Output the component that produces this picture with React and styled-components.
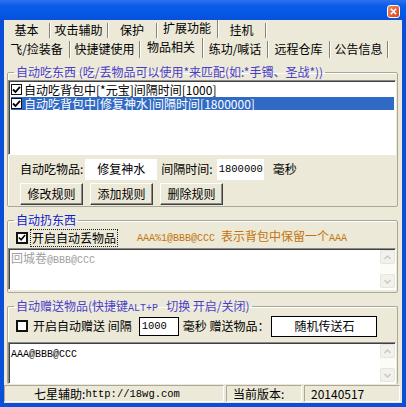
import React from 'react'
import styled, { createGlobalStyle } from 'styled-components'

const CJK = `"Noto Sans CJK SC", "Noto Sans", sans-serif`
const MONO = `"Liberation Mono", "DejaVu Sans Mono", monospace`

const GlobalStyle = createGlobalStyle`
  html, body {
    margin: 0;
    padding: 0;
    background: #fff;
  }
  body {
    font-family: ${CJK};
    font-size: 12px;
  }
`

const Window = styled.div`
  width: 406px;
  height: 407px;
  display: flex;
  flex-direction: column;
  overflow: hidden;
  background: #0a4fd8;
  font-family: ${CJK};
  font-size: 12px;
  line-height: 14px;
  color: #000;
`

const TitleBar = styled.div`
  flex: none;
  height: 20px;
  box-sizing: border-box;
  display: flex;
  justify-content: flex-end;
  align-items: flex-start;
  padding: 5px 6px 0 0;
  background: linear-gradient(to bottom, #2c72ee 0, #0b5be8 30%, #0556e4 75%, #0a4fd8 100%);
`

const CloseButton = styled.div`
  width: 13px;
  height: 13px;
  box-sizing: border-box;
  border: 1px solid #fff;
  border-radius: 3px;
  background: linear-gradient(135deg, #ee8a62, #d4431a);
  display: flex;
  align-items: center;
  justify-content: center;
`

const Frame = styled.div`
  flex: 1;
  min-height: 0;
  margin: 0 4px 4px;
  background: #ece9d8;
  display: flex;
  flex-direction: column;
`

const TabRow = styled.div`
  flex: none;
  height: ${p => p.$h}px;
  display: flex;
  align-items: flex-end;
`

const Tab = styled.div`
  width: ${p => p.$w}px;
  height: ${p => (p.$active ? '100%' : 'calc(100% - 3px)')};
  box-sizing: border-box;
  display: flex;
  align-items: center;
  justify-content: center;
  padding-bottom: ${p => (p.$active ? 3 : 1)}px;
  border-right: 1px solid #85837a;
  box-shadow: 1px 0 0 #fff;
  white-space: nowrap;
`

const Page = styled.div`
  flex: 1;
  min-height: 0;
  display: flex;
  flex-direction: column;
  gap: 6px;
  padding: 7px 4px 0 3px;
`

const Group = styled.fieldset`
  margin: 0;
  min-width: 0;
  padding: ${p => p.$pt}px 1px ${p => p.$pb}px 0;
  border: 1px solid #a9a797;
  border-bottom: ${p => (p.$open ? 'none' : '1px solid #a9a797')};
  border-radius: 2px;
  box-shadow: inset 1px 1px 0 #fff;
`

const Legend = styled.legend`
  margin-left: 6px;
  padding: 0 2px;
  height: 14px;
  line-height: 14px;
  color: ${p => p.$color};
  white-space: pre;
`

const Column = styled.div`
  display: flex;
  flex-direction: column;
  gap: ${p => p.$gap}px;
`

const Sunken = styled.div`
  box-sizing: border-box;
  background: #fff;
  border: 1px solid;
  border-color: #8a8a8a #fff #fff #8a8a8a;
  box-shadow: inset 1px 1px 0 #404040;
`

const ListBox = styled(Sunken)`
  height: 75px;
  padding: 2px 1px 0 2px;
  display: flex;
  flex-direction: column;
  gap: 1px;
`

const ListRow = styled.div`
  height: 13px;
  line-height: 13px;
  display: flex;
  align-items: center;
  gap: 2px;
  background: ${p => (p.$selected ? '#316ac5' : 'transparent')};
  color: ${p => (p.$selected ? '#fff' : '#000')};
  white-space: nowrap;
`

const Check = styled.span`
  flex: none;
  width: ${p => (p.$bold ? 12 : 11)}px;
  height: ${p => (p.$bold ? 12 : 11)}px;
  box-sizing: border-box;
  background: #fff;
  border: ${p => (p.$bold ? 2 : 1)}px solid #111;
  display: flex;
  align-items: center;
  justify-content: center;
`

const Mono = styled.span`
  font-family: ${MONO};
  font-size: ${p => p.$size || 10}px;
`

const Row = styled.div`
  height: ${p => p.$h}px;
  display: flex;
  align-items: center;
  padding-left: ${p => p.$pl}px;
  gap: ${p => p.$gap || 0}px;
  white-space: nowrap;
`

const Label = styled.span`
  margin-left: ${p => p.$ml || 0}px;
  color: ${p => p.$color || 'inherit'};
`

const Field = styled.div`
  width: ${p => p.$w}px;
  height: ${p => p.$h || 21}px;
  margin-left: ${p => p.$ml || 0}px;
  box-sizing: border-box;
  background: #fff;
  border: ${p => (p.$framed ? '1px solid #000' : 'none')};
  display: flex;
  align-items: center;
  justify-content: ${p => (p.$center ? 'center' : 'flex-start')};
  padding-left: ${p => (p.$center ? 0 : 2)}px;
`

const Button = styled.div`
  width: 63px;
  height: 22px;
  box-sizing: border-box;
  display: flex;
  align-items: center;
  justify-content: center;
  background: #ece9d8;
  border: 1px solid;
  border-color: #fff #404040 #404040 #fff;
  box-shadow: inset -1px -1px 0 #8a8a8a;
`

const FocusLabel = styled.span`
  margin-left: 3px;
  padding: 1px 1px;
  outline: 1px dotted #222;
  outline-offset: 0;
`

const TextArea = styled(Sunken)`
  height: ${p => p.$h}px;
  display: flex;
`

const TextBody = styled.div`
  flex: 1;
  padding: 2px 2px;
  color: ${p => (p.$disabled ? '#a0a0a0' : '#000')};
  white-space: nowrap;
`

const ScrollBar = styled.div`
  flex: none;
  width: 15px;
  margin: 1px 0;
  display: flex;
  flex-direction: column;
  justify-content: space-between;
  background: #fbfbf7;
`

const ScrollButton = styled.div`
  height: 14px;
  box-sizing: border-box;
  border: 1px solid #e6e4dc;
  border-radius: 2px;
  background: #f2f1eb;
  display: flex;
  align-items: center;
  justify-content: center;
`

const StatusBar = styled.div`
  flex: none;
  height: 19px;
  box-sizing: border-box;
  display: flex;
  gap: 2px;
  padding: 1px 2px 1px 0;
`

const Panel = styled.div`
  width: ${p => (p.$w ? `${p.$w}px` : 'auto')};
  flex: ${p => (p.$w ? 'none' : '1')};
  box-sizing: border-box;
  border: 1px solid;
  border-color: #aca899 #fff #fff #aca899;
  display: flex;
  align-items: center;
  justify-content: ${p => (p.$center ? 'center' : 'flex-start')};
  padding: ${p => (p.$center ? '0 14px 0 0' : '0 0 0 6px')};
  white-space: nowrap;
`

const CheckMark = () => (
  <svg width="9" height="9" viewBox="0 0 9 9">
    <path d="M1 4.5 L3.5 7 L8 1.8" fill="none" stroke="#000" strokeWidth="1.8" />
  </svg>
)

const Arrow = ({ up }) => (
  <svg width="7" height="5" viewBox="0 0 7 5">
    <path d={up ? 'M0.5 4 L3.5 1 L6.5 4' : 'M0.5 1 L3.5 4 L6.5 1'} fill="none" stroke="#c9c7bb" strokeWidth="1.4" />
  </svg>
)

const Scroll = () => (
  <ScrollBar>
    <ScrollButton><Arrow up /></ScrollButton>
    <ScrollButton><Arrow /></ScrollButton>
  </ScrollBar>
)

const outerTabs = [
  { label: '基本', w: 46 },
  { label: '攻击辅助', w: 58 },
  { label: '保护', w: 49 },
  { label: '扩展功能', w: 61, active: true },
  { label: '挂机', w: 48 },
]

const innerTabs = [
  { label: '飞/捡装备', w: 66 },
  { label: '快捷键使用', w: 70 },
  { label: '物品相关', w: 63, active: true },
  { label: '练功/喊话', w: 65 },
  { label: '远程仓库', w: 62 },
  { label: '公告信息', w: 58 },
]

export default function App() {
  return (
    <>
      <GlobalStyle />
      <Window>
        <TitleBar>
          <CloseButton>
            <svg width="7" height="7" viewBox="0 0 7 7">
              <path d="M0.8 0.8 L6.2 6.2 M6.2 0.8 L0.8 6.2" stroke="#fff" strokeWidth="1.6" />
            </svg>
          </CloseButton>
        </TitleBar>
        <Frame>
          <TabRow $h={18}>
            {outerTabs.map(t => (
              <Tab key={t.label} $w={t.w} $active={t.active}>{t.label}</Tab>
            ))}
          </TabRow>
          <TabRow $h={20}>
            {innerTabs.map(t => (
              <Tab key={t.label} $w={t.w} $active={t.active}>{t.label}</Tab>
            ))}
          </TabRow>

          <Page>
            <Group $pt={1} $pb={1}>
              <Legend $color="#4a3ec8">自动吃东西 (吃/丢物品可以使用*来匹配(如:*手镯、圣战*))</Legend>
              <Column $gap={3}>
                <ListBox>
                  <ListRow>
                    <Check><CheckMark /></Check>
                    <span>自动吃背包中[*元宝]间隔时间[1000]</span>
                  </ListRow>
                  <ListRow $selected>
                    <Check><CheckMark /></Check>
                    <span>自动吃背包中[修复神水]间隔时间[1800000]</span>
                  </ListRow>
                </ListBox>
                <Row $h={22} $pl={12}>
                  <Label>自动吃物品:</Label>
                  <Field $w={72} $ml={2} $center>修复神水</Field>
                  <Label $ml={4}>间隔时间:</Label>
                  <Field $w={47} $ml={4}><Mono $size={10.5}>1800000</Mono></Field>
                  <Label $ml={9}>毫秒</Label>
                </Row>
                <Row $h={22} $pl={12} $gap={7}>
                  <Button>修改规则</Button>
                  <Button>添加规则</Button>
                  <Button>删除规则</Button>
                </Row>
              </Column>
            </Group>

            <Group $pt={2} $pb={2}>
              <Legend $color="#1020d0">自动扔东西</Legend>
              <Column $gap={2}>
                <Row $h={17} $pl={8}>
                  <Check $bold><CheckMark /></Check>
                  <FocusLabel>开启自动丢物品</FocusLabel>
                  <Label $ml={20} $color="#c4740a">
                    <Mono>AAA%1@BBB@CCC </Mono>表示背包中保留一个<Mono>AAA</Mono>
                  </Label>
                </Row>
                <TextArea $h={42}>
                  <TextBody $disabled>回城卷<Mono>@BBB@CCC</Mono></TextBody>
                  <Scroll />
                </TextArea>
              </Column>
            </Group>

            <Group $pt={2} $pb={0} $open>
              <Legend $color="#4a3ec8">自动赠送物品(快捷键<Mono>ALT+P</Mono>   切换 开启/关闭)</Legend>
              <Column $gap={5}>
                <Row $h={22} $pl={8}>
                  <Check $bold />
                  <Label $ml={5}>开启自动赠送 间隔</Label>
                  <Field $w={40} $h={19} $ml={7} $framed><Mono $size={10.5}>1000</Mono></Field>
                  <Label $ml={4}>毫秒 赠送物品：</Label>
                  <Field $w={106} $ml={2} $framed $center>随机传送石</Field>
                </Row>
                <TextArea $h={42}>
                  <TextBody><Mono>AAA@BBB@CCC</Mono></TextBody>
                  <Scroll />
                </TextArea>
              </Column>
            </Group>
          </Page>

          <StatusBar>
            <Panel $w={220} $center>七星辅助:<Mono $size={10.5}>http://18wg.com</Mono></Panel>
            <Panel $w={76}>当前版本:</Panel>
            <Panel>20140517</Panel>
          </StatusBar>
        </Frame>
      </Window>
    </>
  )
}
